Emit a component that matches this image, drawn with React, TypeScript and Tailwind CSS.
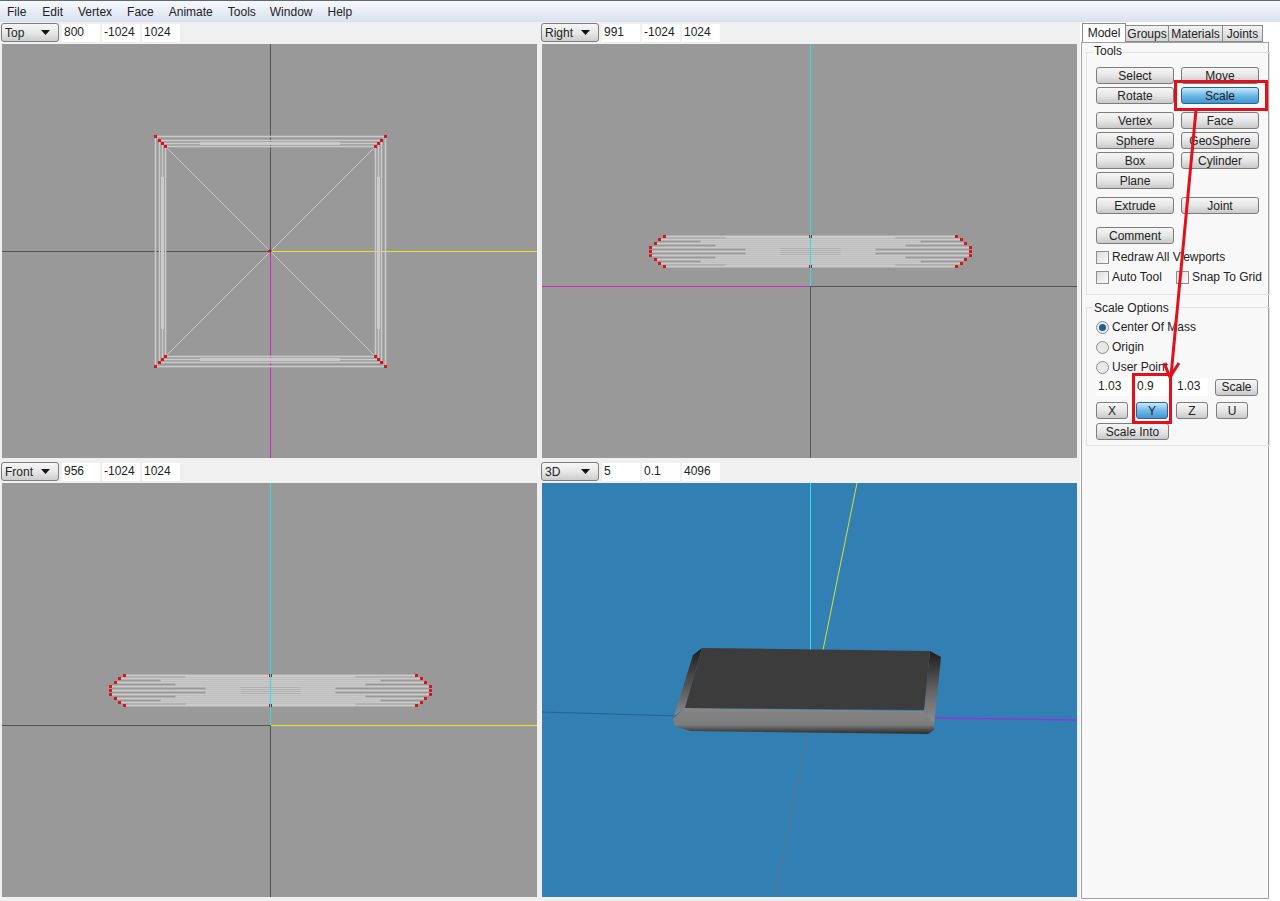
import React from "react";

const FONT = "font-['Liberation_Sans',Arial,sans-serif]";

function Btn({ w, label, active, className = "" }: { w: string; label: string; active?: boolean; className?: string }) {
  return (
    <div
      className={`h-[17px] flex items-center justify-center rounded-[3px] border text-[12px] leading-none text-[#222] ${w} ${
        active
          ? "border-[#2c628b] bg-gradient-to-b from-[#c9e8fa] via-[#6fbbe8] to-[#3f95d0]"
          : "border-[#7d7d7d] bg-gradient-to-b from-[#f6f6f6] via-[#e6e6e6] to-[#c9c9c9]"
      } ${className}`}
    >
      {label}
    </div>
  );
}

function Check({ label, className = "" }: { label: string; className?: string }) {
  return (
    <div className={`flex items-center gap-[3px] text-[12px] leading-none text-[#222] ${className}`}>
      <div className="w-[13px] h-[13px] border border-[#8e8f8f] bg-gradient-to-br from-[#dcdcdc] to-[#fbfbfb]" />
      <span>{label}</span>
    </div>
  );
}

function Radio({ label, on, className = "" }: { label: string; on?: boolean; className?: string }) {
  return (
    <div className={`flex items-center gap-[3px] text-[12px] leading-none text-[#222] ${className}`}>
      <div className="w-[13px] h-[13px] rounded-full border border-[#8e8f8f] bg-[#e8e8e8] flex items-center justify-center">
        {on && <div className="w-[7px] h-[7px] rounded-full bg-[#1f5f92]" />}
      </div>
      <span>{label}</span>
    </div>
  );
}

function Field({ v, w = "w-[38px]" }: { v: string; w?: string }) {
  return <div className={`h-[18px] ${w} bg-white pl-[2px] text-[12px] leading-[17px] text-[#222]`}>{v}</div>;
}

function Toolbar({ name, vals, w }: { name: string; vals: string[]; w: string }) {
  return (
    <div className="h-[22px] flex items-center gap-[2px] pb-[1px]">
      <div
        className={`h-[19px] ${w} -ml-[1px] rounded-[3px] border border-[#7d7d7d] bg-gradient-to-b from-[#f6f6f6] via-[#e8e8e8] to-[#cdcdcd] flex items-center justify-between pl-[3px] pr-[8px] text-[12px] text-[#222]`}
      >
        <span>{name}</span>
        <svg width="9" height="5" viewBox="0 0 9 5">
          <path d="M0 0h9L4.5 5z" fill="#111" />
        </svg>
      </div>
      <div className="flex gap-[2px] ml-[1px]">
        {vals.map((v, i) => (
          <Field key={i} v={v} />
        ))}
      </div>
    </div>
  );
}

const L = "#cacaca";

function Band({ x0, x1, cy }: { x0: number; x1: number; cy: number }) {
  const rows: [number, number][] = [
    [-15, 14],
    [-12, 9],
    [-8, 5],
    [-4, 0],
    [0, 0],
    [4, 0],
    [8, 5],
    [12, 9],
    [15, 14],
  ];
  const reds = rows.flatMap(([o, i]) => [
    [x0 + i, cy + o],
    [x1 - i, cy + o],
  ]);
  const cx = (x0 + x1) / 2;
  return (
    <g>
      {rows.map(([o, i]) => (
        <line key={o} x1={x0 + i} x2={x1 - i} y1={cy + o} y2={cy + o} stroke={L} strokeWidth="2" />
      ))}
      {[
        [-14, 85],
        [14, 85],
        [-10, 110],
        [10, 110],
        [-6, 95],
        [6, 95],
        [-2, 65],
        [2, 65],
      ].map(([o, h]) => (
        <line key={o} x1={cx - h} x2={cx + h} y1={cy + o} y2={cy + o} stroke={L} strokeWidth="2" />
      ))}
      {[-1, 1, -3, 3].map((o) => (
        <line key={o} x1={cx - 30} x2={cx + 30} y1={cy + o} y2={cy + o} stroke="#a8a8a8" strokeWidth="0.7" />
      ))}
      {reds.map(([x, y], i) => (
        <rect key={i} x={x - 1.5} y={y - 1.5} width="3" height="3" fill="#d8141c" />
      ))}
      <rect x={cx - 1.5} y={cy - 16.5} width="3" height="3" fill="#b01820" />
      <rect x={cx - 1.5} y={cy + 13.5} width="3" height="3" fill="#b01820" />
    </g>
  );
}

function TopView() {
  const ins = [0, 4, 7, 10];
  const [l, r, t, b] = [155.5, 385.5, 137.5, 367.5];
  return (
    <svg className="block w-[535px] h-[414px] bg-[#999999]" viewBox="2 45 535 414">
      <line x1="2" x2="270" y1="252.5" y2="252.5" stroke="#555" />
      <line x1="270.5" x2="270.5" y1="45" y2="252" stroke="#555" />
      <line x1="270" x2="537" y1="252.5" y2="252.5" stroke="#e8e820" />
      <line x1="270.5" x2="270.5" y1="252" y2="459" stroke="#c828c8" />
      {ins.map((i) => (
        <g key={i} stroke={L} strokeWidth="1.6" fill="none">
          <rect x={l + i} y={t + i} width={r - l - 2 * i} height={b - t - 2 * i} />
        </g>
      ))}
      <g stroke={L} strokeWidth="1">
        <line x1={l} y1={t} x2={r} y2={b} />
        <line x1={r} y1={t} x2={l} y2={b} />
      </g>
      <g stroke={L} strokeWidth="3">
        <line x1={l + 7} x2={l + 7} y1="178" y2="330" />
        <line x1={r - 7} x2={r - 7} y1="178" y2="330" />
        <line x1="200" x2="340" y1={t + 7} y2={t + 7} />
        <line x1="200" x2="340" y1={b - 7} y2={b - 7} />
      </g>
      {ins.flatMap((i) => [
        [l + i, t + i],
        [r - i, t + i],
        [l + i, b - i],
        [r - i, b - i],
      ]).map(([x, y], k) => (
        <rect key={k} x={x - 1.5} y={y - 1.5} width="3" height="3" fill="#d8141c" />
      ))}
      <rect x="268.5" y="250.5" width="3" height="3" fill="#b01820" />
    </svg>
  );
}

function RightView() {
  return (
    <svg className="block w-[535px] h-[414px] bg-[#999999]" viewBox="542 45 535 414">
      <line x1="542" x2="811" y1="287.5" y2="287.5" stroke="#c828c8" />
      <line x1="811" x2="1077" y1="287.5" y2="287.5" stroke="#555" />
      <line x1="810.5" x2="810.5" y1="287" y2="459" stroke="#555" />
      <Band x0={650.5} x1={970.5} cy={252.5} />
      <line x1="810.5" x2="810.5" y1="45" y2="287" stroke="#30e0e0" />
    </svg>
  );
}

function FrontView() {
  return (
    <svg className="block w-[535px] h-[414px] bg-[#999999]" viewBox="2 485 535 414">
      <line x1="2" x2="271" y1="727.5" y2="727.5" stroke="#555" />
      <line x1="271" x2="537" y1="727.5" y2="727.5" stroke="#e8e820" />
      <line x1="270.5" x2="270.5" y1="727" y2="899" stroke="#555" />
      <Band x0={110.5} x1={430.5} cy={692.5} />
      <line x1="270.5" x2="270.5" y1="485" y2="727" stroke="#30e0e0" />
    </svg>
  );
}

function View3D() {
  return (
    <svg className="block w-[535px] h-[414px] bg-[#317fb3]" viewBox="542 485 535 414">
      <defs>
        <linearGradient id="ls" x1="0" y1="0" x2="0" y2="1">
          <stop offset="0" stopColor="#1c1c1c" />
          <stop offset="0.55" stopColor="#555" />
          <stop offset="1" stopColor="#8a8a8a" />
        </linearGradient>
        <linearGradient id="rs" x1="0" y1="0" x2="0" y2="1">
          <stop offset="0" stopColor="#1c1c1c" />
          <stop offset="0.55" stopColor="#666" />
          <stop offset="1" stopColor="#929292" />
        </linearGradient>
        <linearGradient id="fr" x1="0" y1="0" x2="0" y2="1">
          <stop offset="0" stopColor="#878787" />
          <stop offset="0.65" stopColor="#7c7c7c" />
          <stop offset="0.85" stopColor="#4a4a4a" />
          <stop offset="1" stopColor="#2c2c2c" />
        </linearGradient>
      </defs>
      <line x1="542" y1="714" x2="680" y2="718" stroke="#2a6288" />
      <line x1="934" y1="720" x2="1077" y2="722" stroke="#9a30e0" strokeWidth="1.4" />
      <line x1="808" y1="735" x2="775" y2="899" stroke="#58758a" />
      <line x1="810.5" y1="485" x2="810.5" y2="652" stroke="#30e0e0" />
      <line x1="857" y1="485" x2="823" y2="652" stroke="#d8e030" />
      <polygon points="693,657 702,650 685,710 674,718" fill="url(#ls)" />
      <polygon points="930,653 941,659 934,728 924,712" fill="url(#rs)" />
      <polygon points="685,710 924,713 934,725 934,732 928,736 690,733 675,728 673,721" fill="url(#fr)" />
      <polygon points="702,650 930,653 924,712 685,710" fill="#3c3c3c" />
    </svg>
  );
}

export default function App() {
  return (
    <div className={`relative w-[1280px] h-[901px] overflow-hidden bg-[#f0f0f0] ${FONT}`}>
      <div className="h-[22px] border-t border-[#5b6b70] bg-gradient-to-b from-[#f6f8fb] to-[#d9e2f1] flex items-center text-[12px] text-[#222] pt-[1px]">
        {[
          ["File", "ml-[7px]"],
          ["Edit", "ml-[16px]"],
          ["Vertex", "ml-[15px]"],
          ["Face", "ml-[15px]"],
          ["Animate", "ml-[15px]"],
          ["Tools", "ml-[15px]"],
          ["Window", "ml-[14px]"],
          ["Help", "ml-[15px]"],
        ].map(([t, c]) => (
          <span key={t} className={c}>
            {t}
          </span>
        ))}
      </div>
      <div className="flex h-[879px]">
        <div className="w-[1080px] pl-[2px] grid grid-cols-[535px_535px] gap-x-[5px] content-start">
          <div>
            <Toolbar name="Top" vals={["800", "-1024", "1024"]} w="w-[58px]" />
            <TopView />
          </div>
          <div>
            <Toolbar name="Right" vals={["991", "-1024", "1024"]} w="w-[58px]" />
            <RightView />
          </div>
          <div className="mt-[3px]">
            <Toolbar name="Front" vals={["956", "-1024", "1024"]} w="w-[58px]" />
            <FrontView />
          </div>
          <div className="mt-[3px]">
            <Toolbar name="3D" vals={["5", "0.1", "4096"]} w="w-[58px]" />
            <View3D />
          </div>
        </div>
        <div className="w-[200px] pl-[1px] pt-[1px] bg-white">
          <div className="flex items-end h-[19px] text-[12px] leading-none text-[#222] pl-[1px]">
            <div className="w-[44px] h-[19px] border border-b-0 border-[#8a8a8a] bg-white flex items-center justify-center">
              Model
            </div>
            <div className="w-[43px] h-[17px] border border-l-0 border-[#8a8a8a] bg-gradient-to-b from-[#f2f2f2] to-[#d4d4d4] flex items-center justify-center">
              Groups
            </div>
            <div className="w-[54px] h-[17px] border border-l-0 border-[#8a8a8a] bg-gradient-to-b from-[#f2f2f2] to-[#d4d4d4] flex items-center justify-center">
              Materials
            </div>
            <div className="w-[40px] h-[17px] border border-l-0 border-[#8a8a8a] bg-gradient-to-b from-[#f2f2f2] to-[#d4d4d4] flex items-center justify-center">
              Joints
            </div>
          </div>
          <div className="w-[188px] h-[857px] border border-[#a0a0a0] bg-[#f8f8f8] pl-[4px] pt-[9px]">
            <div className="relative w-[184px] h-[243px] border border-[#e2e2e2] pl-[9px] pt-[14px]">
              <span className="absolute -top-[8px] left-[6px] bg-[#f8f8f8] px-[1px] text-[12px] leading-none text-[#222]">Tools</span>
              <div className="flex gap-[7px]">
                <Btn w="w-[78px]" label="Select" />
                <Btn w="w-[78px]" label="Move" />
              </div>
              <div className="flex gap-[7px] mt-[3px]">
                <Btn w="w-[78px]" label="Rotate" />
                <Btn w="w-[78px]" label="Scale" active />
              </div>
              <div className="flex gap-[7px] mt-[8px]">
                <Btn w="w-[78px]" label="Vertex" />
                <Btn w="w-[78px]" label="Face" />
              </div>
              <div className="flex gap-[7px] mt-[3px]">
                <Btn w="w-[78px]" label="Sphere" />
                <Btn w="w-[78px]" label="GeoSphere" />
              </div>
              <div className="flex gap-[7px] mt-[3px]">
                <Btn w="w-[78px]" label="Box" />
                <Btn w="w-[78px]" label="Cylinder" />
              </div>
              <Btn w="w-[78px]" label="Plane" className="mt-[3px]" />
              <div className="flex gap-[7px] mt-[8px]">
                <Btn w="w-[78px]" label="Extrude" />
                <Btn w="w-[78px]" label="Joint" />
              </div>
              <Btn w="w-[78px]" label="Comment" className="mt-[13px]" />
              <Check label="Redraw All Viewports" className="mt-[5px] h-[16px]" />
              <div className="flex mt-[4px]">
                <Check label="Auto Tool" className="w-[80px] h-[16px]" />
                <Check label="Snap To Grid" className="h-[16px]" />
              </div>
            </div>
            <div className="relative w-[184px] h-[139px] border border-[#e2e2e2] mt-[12px] pl-[9px] pt-[12px]">
              <span className="absolute -top-[6px] left-[6px] bg-[#f8f8f8] px-[1px] text-[12px] leading-none text-[#222]">Scale Options</span>
              <Radio label="Center Of Mass" on className="h-[14px]" />
              <Radio label="Origin" className="h-[14px] mt-[6px]" />
              <Radio label="User Point" className="h-[14px] mt-[6px]" />
              <div className="flex items-center mt-[4px]">
                <Field v="1.03" w="w-[33px]" />
                <Field v="0.9" w="w-[34px] ml-[6px]" />
                <Field v="1.03" w="w-[33px] ml-[6px]" />
                <Btn w="w-[43px]" label="Scale" className="ml-[7px]" />
              </div>
              <div className="flex gap-[8px] mt-[6px]">
                <Btn w="w-[32px]" label="X" />
                <Btn w="w-[32px]" label="Y" active />
                <Btn w="w-[32px]" label="Z" />
                <Btn w="w-[32px]" label="U" />
              </div>
              <Btn w="w-[73px]" label="Scale Into" className="mt-[4px]" />
            </div>
          </div>
        </div>
      </div>
      <svg className="absolute left-0 top-0 pointer-events-none" width="1280" height="901" viewBox="0 0 1280 901">
        <g fill="none" stroke="#e0101c" strokeWidth="3">
          <rect x="1175.5" y="81.5" width="91" height="28" />
          <rect x="1133.5" y="374.5" width="37" height="48" />
          <path d="M1196 110 L1171 376" />
          <path d="M1164 363 L1170 377 L1179 363" />
        </g>
      </svg>
    </div>
  );
}
